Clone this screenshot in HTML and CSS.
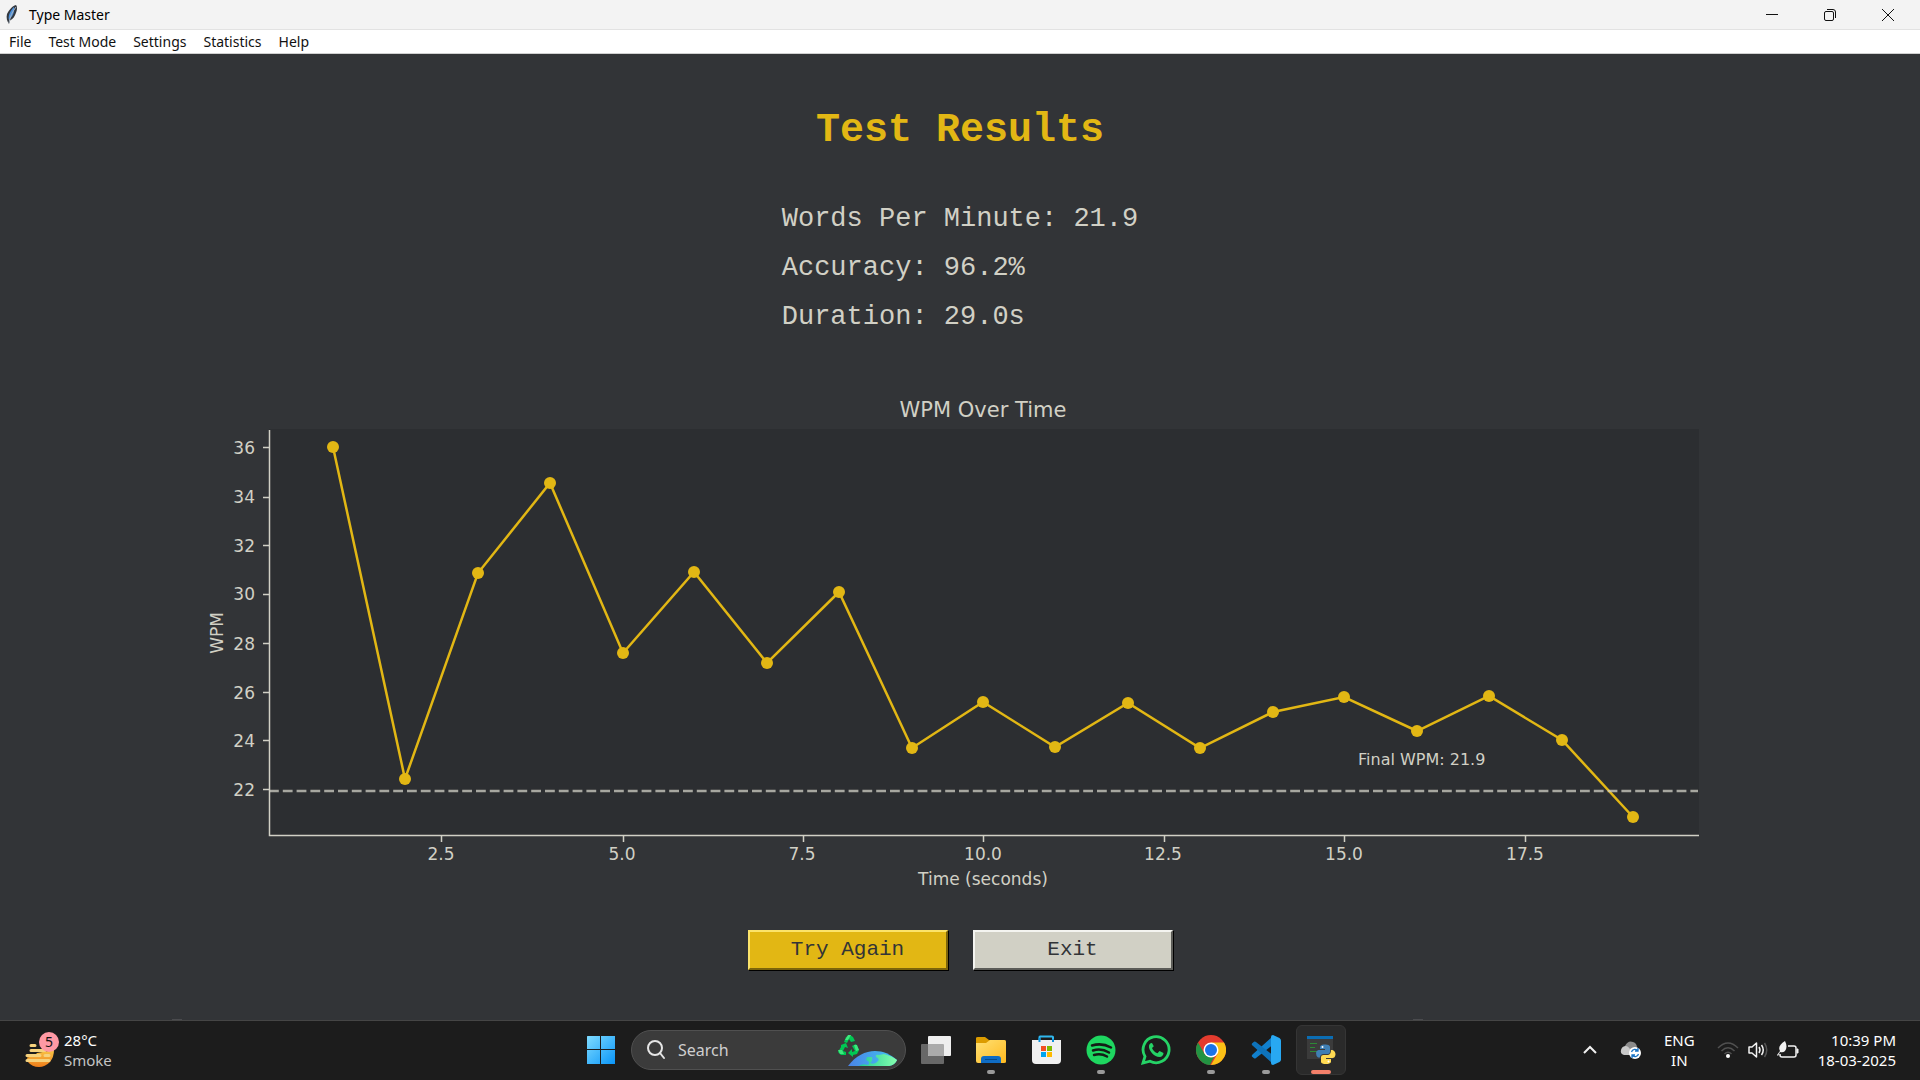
FILE: index.html
```html
<!DOCTYPE html>
<html lang="en">
<head>
<meta charset="utf-8">
<title>Type Master</title>
<link rel="stylesheet" href="styles.css">
</head>
<body>
<div class="desktop">
  <header class="titlebar">
    <svg class="feather" width="14" height="20" viewBox="0 0 14 20" aria-hidden="true">
      <path d="M4 19C2 16 1 13 2 9C4 5 7 1 11 0C13 2 12 7 9 12C8 14 5 15 5 16Z" fill="#33383f"/>
      <path d="M4 15C3 12 4 7 9 2C10 6 8 11 4 15Z" fill="#4a90dc"/>
      <path d="M4 18C5 12 7 7 11 2" fill="none" stroke="#a9b3be"/>
    </svg>
    <span class="window-title">Type Master</span>
    <div class="window-controls">
      <button class="win-btn" aria-label="Minimize"><svg width="14" height="14" viewBox="0 0 14 14"><path d="M1 6.500H13"/></svg></button>
      <button class="win-btn" aria-label="Restore"><svg width="14" height="14" viewBox="0 0 14 14"><rect x="1.500" y="3.500" width="9" height="9" rx="1.500"/><path d="M4 1.500H10Q12.500 1.500 12.500 4V10"/></svg></button>
      <button class="win-btn" aria-label="Close"><svg width="14" height="14" viewBox="0 0 14 14"><path d="M1 1L13 13M13 1L1 13"/></svg></button>
    </div>
  </header>
  <nav class="menubar" aria-label="Main menu">
    <button class="menu-item">File</button>
    <button class="menu-item">Test Mode</button>
    <button class="menu-item">Settings</button>
    <button class="menu-item">Statistics</button>
    <button class="menu-item">Help</button>
  </nav>

  <main class="results">
    <h1 class="heading">Test Results</h1>
    <div class="stats">
      <p class="stat">Words Per Minute: 21.9</p>
      <p class="stat">Accuracy: 96.2%</p>
      <p class="stat">Duration: 29.0s</p>
    </div>
    <svg class="chart" viewBox="0 0 1536 530" role="img" aria-label="WPM Over Time">
      <rect class="plot" x="77" y="49" width="1430" height="406"/>
      <text class="chart-title" x="791" y="37">WPM Over Time</text>
      <polyline class="series" points="141,67 213,399 286,193 358,103 431,273 502,192 575,283 647,212 720,368 791,322 863,367 936,323 1008,368 1081,332 1152,317 1225,351 1297,316 1370,360 1441,437"/>
      <g class="marker">
        <circle cx="141" cy="67" r="6"/><circle cx="213" cy="399" r="6"/><circle cx="286" cy="193" r="6"/><circle cx="358" cy="103" r="6"/><circle cx="431" cy="273" r="6"/><circle cx="502" cy="192" r="6"/><circle cx="575" cy="283" r="6"/><circle cx="647" cy="212" r="6"/><circle cx="720" cy="368" r="6"/><circle cx="791" cy="322" r="6"/><circle cx="863" cy="367" r="6"/><circle cx="936" cy="323" r="6"/><circle cx="1008" cy="368" r="6"/><circle cx="1081" cy="332" r="6"/><circle cx="1152" cy="317" r="6"/><circle cx="1225" cy="351" r="6"/><circle cx="1297" cy="316" r="6"/><circle cx="1370" cy="360" r="6"/><circle cx="1441" cy="437" r="6"/>
      </g>
      <path class="average" d="M77 411H1506"/>
      <path class="axis" d="M77.500 50V455.500H1507"/>
      <path class="axis" d="M71 67.500H77M71 117.500H77M71 165.500H77M71 214.500H77M71 263.500H77M71 312.500H77M71 360.500H77M71 409.500H77"/>
      <path class="axis" d="M249.500 456V462M431.500 456V462M611.500 456V462M791.500 456V462M972.500 456V462M1152.500 456V462M1333.500 456V462"/>
      <g class="y-label">
        <text x="63" y="74">36</text><text x="63" y="123">34</text><text x="63" y="172">32</text><text x="63" y="220">30</text><text x="63" y="270">28</text><text x="63" y="319">26</text><text x="63" y="367">24</text><text x="63" y="416">22</text>
      </g>
      <g class="x-label">
        <text x="249" y="480">2.5</text><text x="430" y="480">5.0</text><text x="610" y="480">7.5</text><text x="791" y="480">10.0</text><text x="971" y="480">12.5</text><text x="1152" y="480">15.0</text><text x="1333" y="480">17.5</text>
        <text x="791" y="505">Time (seconds)</text>
        <text transform="translate(31 253) rotate(-90)">WPM</text>
      </g>
      <text class="note" x="1166" y="385">Final WPM: 21.9</text>
    </svg>
    <div class="actions">
      <button class="action action-primary">Try Again</button>
      <button class="action">Exit</button>
    </div>
  </main>

  <footer class="taskbar">
    <button class="weather">
      <svg width="36" height="38" viewBox="0 0 36 38" aria-hidden="true">
        <defs><linearGradient id="sun" x2="0" y2="1"><stop stop-color="#f9c646"/><stop offset="1" stop-color="#ef7d1a"/></linearGradient></defs>
        <path d="M2 26.500Q10 25 12 22L29 19Q29 26 25 31Q20 36 14 36Q7 36 3 31Z" fill="url(#sun)"/>
        <path d="M6 14.500H10M6 19.500H20M2 24.500H15M20 24.500H24M2 29.500H24" fill="none" stroke="#f6d27d" stroke-width="3" stroke-linecap="round"/>
        <circle cx="24" cy="11" r="10" fill="#ff99a4"/>
        <text class="badge-text" x="24" y="16">5</text>
      </svg>
      <span class="weather-text"><span>28°C</span><span class="muted">Smoke</span></span>
    </button>

    <div class="apps">
      <button class="app" aria-label="Start">
        <svg width="30" height="30" viewBox="0 0 30 30"><defs><linearGradient id="win" x2="1" y2="1"><stop stop-color="#7fdcff"/><stop offset="1" stop-color="#0a95f8"/></linearGradient></defs><path fill="url(#win)" d="M1.500 1H14V14H1V1.500ZM15 1H29V14H15ZM1 15H14V29H1ZM15 15H29V29H15Z"/></svg>
      </button>
      <label class="search">
        <svg width="20" height="20" viewBox="0 0 20 20" aria-hidden="true"><circle cx="9" cy="8" r="7" fill="none" stroke="#e6e6e6" stroke-width="2"/><path d="M14 13L18 18" stroke="#e6e6e6" stroke-width="2" stroke-linecap="round"/></svg>
        <input class="search-input" type="text" placeholder="Search" aria-label="Search">
        <svg class="search-art" width="62" height="34" viewBox="0 0 62 34" aria-hidden="true">
          <defs><linearGradient id="sea" x2="1"><stop stop-color="#4a83e8"/><stop offset="1" stop-color="#41c6ef"/></linearGradient><linearGradient id="land" x2="1"><stop stop-color="#20ca98"/><stop offset="1" stop-color="#86ffae"/></linearGradient></defs>
          <path d="M11 33C25 14 46 14 60 27Q58 32 52 33Z" fill="url(#sea)"/>
          <path d="M22 33Q25 30 31 32Q34 29 29 27L30 24L35 24Q36 28 33 30Q38 32 41 28Q43 26 39 24Q38 21 42 22L47 21Q55 23 60 27Q58 32 52 33Z" fill="url(#land)"/>
          <path d="M7 9L9 4L13 2L16 4L18 8L14 9L12 6L10 10ZM16 2L19 8M4 12L9 10L11 15L8 14L6 18L9 19V22H4L1 19L4 14ZM11 20L15 16V19L18 18L15 13L19 11L22 17L20 21L16 22V24Z" fill="#00c853"/>
          <path d="M8 7L11 2H14L11 7ZM1 17L5 17L7 21H3ZM17 12L20 12L22 17L19 18Z" fill="#3ee87d"/>
        </svg>
      </label>
      <button class="app" aria-label="Task view">
        <svg width="32" height="30" viewBox="0 0 32 30"><rect x="1" y="9" width="23" height="20" rx="1" fill="#686868"/><rect x="8" y="1" width="23" height="20" rx="1" fill="#efefef"/><path d="M8 9H23Q24 9 24 10V21H9Q8 21 8 20Z" fill="#ababab"/></svg>
      </button>
      <button class="app app-open" aria-label="File Explorer">
        <svg width="30" height="30" viewBox="0 0 30 30"><path d="M0 3Q0 2 2 2H9L13 5H28Q30 5 30 7V15H0Z" fill="#dc9c00"/><defs><linearGradient id="folder" x2="1" y2="1"><stop stop-color="#ffe174"/><stop offset="1" stop-color="#ffb91f"/></linearGradient></defs><path d="M0 8H10L14 5H28Q30 5 30 7V27Q30 28 28 28H2Q0 28 0 26Z" fill="url(#folder)"/><path d="M5 28V24Q5 21 8 21H22Q25 21 25 24V28Z" fill="#0f6cc4"/><path d="M9 24.500H21" stroke="#064b8b" stroke-width="1"/></svg>
      </button>
      <button class="app" aria-label="Microsoft Store">
        <svg width="30" height="30" viewBox="0 0 30 30"><path d="M8.500 7V2Q8.500 1.500 9 1.500H21Q22 1.500 22 2V7" fill="none" stroke="#30b8ee" stroke-width="2"/><path d="M1 5H30V25Q30 29 26 29H5Q1 29 1 25Z" fill="#f0f0f0"/><path d="M8.500 7V4H7.500M22 7V4" fill="none" stroke="#0d92dc" stroke-width="2"/><path d="M10 11H15V16H10Z" fill="#f25022"/><path d="M16 11H21V16H16Z" fill="#7fba00"/><path d="M10 17H15V22H10Z" fill="#00a4ef"/><path d="M16 17H21V22H16Z" fill="#ffb900"/></svg>
      </button>
      <button class="app app-open" aria-label="Spotify">
        <svg width="30" height="30" viewBox="0 0 30 30"><circle cx="15" cy="15" r="14.500" fill="#1ed760"/><path d="M6 10.500Q16 7.500 25 12.500M7 15.500Q15.500 13 23 17.500M8 20Q15 18 21 21.500" fill="none" stroke="#141c16" stroke-width="2.500" stroke-linecap="round"/></svg>
      </button>
      <button class="app" aria-label="WhatsApp">
        <svg width="30" height="30" viewBox="0 0 30 30"><path d="M2 28L4 21.500A13 13 0 1 1 9 26.200Z" fill="none" stroke="#25d366" stroke-width="2.800"/><path d="M11 8C9 8 7.500 10 8 12.500C9 17 13 21.500 18.500 22C21 22 22.500 20 22.500 18L18.500 16L16.500 18.300C14 17.500 12 15.500 11 13L12.800 11.300Z" fill="#25d366"/></svg>
      </button>
      <button class="app app-open" aria-label="Chrome">
        <svg width="30" height="30" viewBox="0 0 30 30"><circle cx="15" cy="15" r="15" fill="#e33b2e"/><path d="M15 7.500H28A15 15 0 0 1 15 30L21.500 18.700Z" fill="#fbc116"/><path d="M2 7.500L8.500 18.700Q12 23 18 22L14 30A15 15 0 0 1 2 7.500Z" fill="#229342"/><circle cx="15" cy="15" r="7.500" fill="#fff"/><circle cx="15" cy="15" r="6" fill="#1a73e8"/></svg>
      </button>
      <button class="app app-open" aria-label="Visual Studio Code">
        <svg width="30" height="30" viewBox="0 0 30 30"><path d="M22 1L1.500 19.500Q0 21 1.500 22L3 23.200Q4 24 5 23L23 9Z" fill="#1180cd"/><path d="M22 29L1.500 10.500Q0 9 1.500 8L3 6.800Q4 6 5 7L23 21Z" fill="#0e73bb"/><path d="M22 0L28.500 3Q30 4 30 5.500V24.500Q30 26 28.500 27L22 30Q20 30 20 28V2Q20 0 22 0Z" fill="#28a8f2"/></svg>
      </button>
      <button class="app app-active" aria-label="Type Master">
        <svg width="30" height="30" viewBox="0 0 30 30"><rect x="1" y="1" width="26" height="23" fill="#3b3b3b"/><path d="M1 1H27V4H1Z" fill="#0b6db3"/><path d="M4 8.500H11M4 12.500H9M4 16.500H12" stroke="#2c8a35"/>
          <path d="M18 9.500Q23 9 24 11.500V17Q24 19 22 19H17Q14 19.500 14 22.500H12Q10 21 10 18Q10 15.500 12.500 15H19V14H14V12Q14 10 18 9.500Z" fill="#3f7fb4"/><path d="M20 29Q15.500 29 15 27V22Q15 20 17.500 20H22Q25 19.500 25 15H26.500Q29.500 16 29.500 19.500Q29 23 26.500 23H20V24H25V27Q24 29 20 29Z" fill="#ffda52"/><circle cx="16.500" cy="12" r="1" fill="#fff"/><circle cx="22.500" cy="26.500" r="1" fill="#fff"/></svg>
      </button>
    </div>

    <div class="tray">
      <button class="tray-btn" aria-label="Show hidden icons"><svg width="16" height="16" viewBox="0 0 16 16"><path d="M2 11L8 5L14 11" fill="none" stroke="#f0f0f0" stroke-width="2"/></svg></button>
      <button class="tray-btn tray-cloud" aria-label="Cloud sync"><svg width="22" height="20" viewBox="0 0 22 20"><path d="M5 6Q8 0 13 2Q17 3 17 8V11H5Z" fill="#8b8b8b"/><path d="M4 15Q0 14 1 10Q2 6 6 6Q8 6 10 9L13 8V15Z" fill="#c9c9c9"/><circle cx="15" cy="13" r="6" fill="#fff"/><path d="M11.500 12A3.600 3.600 0 0 1 18 11M18.500 14A3.600 3.600 0 0 1 12 15M18 8V11H15M12 18V15H15" fill="none" stroke="#1672c4" stroke-width="1.300"/></svg></button>
      <button class="tray-btn language"><span>ENG</span><span>IN</span></button>
      <button class="tray-btn status" aria-label="Network, sound and battery">
        <svg width="22" height="18" viewBox="0 0 22 18"><path d="M1 7Q11-3 21 7M4.500 10Q11 3.500 17.500 10M7.500 13Q11 9.500 14.500 13" fill="none" stroke="#505050" stroke-width="1.500"/><circle cx="11" cy="15" r="2" fill="#fff"/></svg>
        <svg width="22" height="18" viewBox="0 0 22 18"><path d="M2 6H5L9.500 2V16L5 12H2Z" fill="none" stroke="#f2f2f2" stroke-width="1.500" stroke-linejoin="round"/><path d="M12 6Q14 9 12 12M14.500 4Q18 9 14.500 14" fill="none" stroke="#f2f2f2" stroke-width="1.500"/><path d="M17.500 2Q22 9 17.500 16" fill="none" stroke="#555" stroke-width="1.500"/></svg>
        <svg width="22" height="18" viewBox="0 0 22 18"><path d="M11 5H17Q19 5 19 7V14Q19 16 17 16H5Q3 16 3 14V13" fill="none" stroke="#f2f2f2" stroke-width="1.500"/><path d="M20 8H21V12H20Z" stroke="#f2f2f2" fill="#f2f2f2"/><path d="M8 0Q11 6 8 10Q6 12 3 11L1 15L0 14L3 10Q0 5 8 0Z" fill="#f2f2f2"/></svg>
      </button>
      <button class="tray-btn clock"><span>10:39 PM</span><span>18-03-2025</span></button>
    </div>
  </footer>
</div>
</body>
</html>
```

FILE: styles.css
```css
* {
  box-sizing: border-box;
}

body {
  margin: 0;
  font-family: "Noto Sans", sans-serif;
  font-size: 14px;
}

button {
  margin: 0;
  padding: 0;
  border: 0;
  background: none;
  color: inherit;
  font: inherit;
}

svg {
  display: block;
  flex: none;
}

.desktop {
  display: flex;
  flex-direction: column;
  min-height: 100vh;
  background: #323437;
}

/* Window frame */

.titlebar {
  display: flex;
  align-items: center;
  height: 30px;
  padding-left: 5px;
  border-bottom: 1px solid #e2e2e2;
  background: #f3f3f3;
  color: #000;
}

.window-title {
  margin-left: 10px;
}

.window-controls {
  display: flex;
  align-self: stretch;
  margin-left: auto;
  padding-right: 3px;
}

.win-btn {
  display: grid;
  place-items: center;
  width: 58px;
}

.win-btn svg {
  fill: none;
  stroke: #111;
}

.menubar {
  display: flex;
  gap: 17px;
  height: 24px;
  padding-left: 9px;
  border-bottom: 1px solid #d0d0d0;
  background: #fff;
  color: #111;
}

.menu-item {
  line-height: 22px;
}

/* Results */

.results {
  display: flex;
  flex: 1;
  flex-direction: column;
  align-items: center;
  padding: 47px 0 50px;
  background-image: linear-gradient(#4a4b4e, #4a4b4e), linear-gradient(#4a4b4e, #4a4b4e);
  background-position: 9% 100%, 74% 100%;
  background-repeat: no-repeat;
  background-size: 10px 1px;
  color: #d1d0c5;
}

.heading {
  margin: 0;
  color: #e2b714;
  font: bold 40px/60px "Liberation Mono", "Courier New", monospace;
}

.stats {
  margin-top: 34px;
  font: 27px/49px "Liberation Mono", "Courier New", monospace;
}

.stat {
  margin: 0;
}

.chart {
  width: 80%;
  height: auto;
  margin-top: 38px;
  fill: #d1d0c5;
  font-family: "DejaVu Sans", sans-serif;
  font-size: 17px;
}

.plot {
  fill: #2c2e31;
}

.chart-title {
  font-size: 21px;
  text-anchor: middle;
}

.series {
  fill: none;
  stroke: #e2b714;
  stroke-width: 2.5;
}

.marker {
  fill: #e2b714;
}

.average {
  stroke: #d1d0c5;
  stroke-width: 2.5;
  stroke-dasharray: 9.8 4;
  opacity: 0.75;
}

.axis {
  fill: none;
  stroke: #d1d0c5;
  stroke-width: 1.5;
}

.x-label {
  text-anchor: middle;
}

.y-label {
  text-anchor: end;
}

.note {
  font-size: 16px;
}

.actions {
  display: flex;
  gap: 25px;
  margin-top: 20px;
}

.action {
  width: 200px;
  height: 40px;
  border: 2px solid;
  border-color: #f4f4f0 #5c5c58 #5c5c58 #f4f4f0;
  background: #d1d0c5;
  box-shadow: 1px 1px 0 #000;
  color: #323437;
  font: 21px/36px "Liberation Mono", "Courier New", monospace;
}

.action-primary {
  border-color: #fbe36a #7c640b #7c640b #fbe36a;
  background: #e2b714;
}

/* Taskbar */

.taskbar {
  display: grid;
  grid-template-columns: 1fr auto 1fr;
  align-items: center;
  height: 60px;
  padding-bottom: 2px;
  border-top: 1px solid #454545;
  background: #1c1c1c;
  color: #fff;
  font-size: 15px;
}

.weather {
  display: flex;
  align-items: center;
  justify-self: start;
  gap: 3px;
  padding-left: 25px;
  text-align: left;
}

.weather-text {
  display: flex;
  flex-direction: column;
  line-height: 20px;
}

.muted {
  color: #c4c4c4;
}

.badge-text {
  fill: #111;
  font-size: 14px;
  text-anchor: middle;
}

.apps {
  display: flex;
  align-items: center;
  gap: 5px;
  padding-left: 2px;
}

.app {
  position: relative;
  display: grid;
  place-items: center;
  width: 50px;
  height: 50px;
  border-radius: 6px;
}

.app-active {
  border: 1px solid #353535;
  background: #2a2a2a;
}

.app-open::after,
.app-active::after {
  position: absolute;
  bottom: 1px;
  width: 8px;
  height: 4px;
  border-radius: 2px;
  background: #9a9a9a;
  content: "";
}

.app-active::after {
  bottom: 0;
  width: 20px;
  background: #f4806a;
}

.search {
  display: flex;
  align-items: center;
  gap: 12px;
  width: 275px;
  height: 40px;
  padding: 0 6px 0 14px;
  border: 1px solid #505050;
  border-radius: 20px;
  background: #3b3b3b;
}

.search-input {
  flex: 1;
  min-width: 0;
  padding: 0;
  border: 0;
  background: none;
  color: #fff;
  font-family: inherit;
  font-size: 16px;
}

.search-input::placeholder {
  color: #cfcfcf;
  opacity: 1;
}

.tray {
  display: flex;
  align-items: center;
  justify-self: end;
  padding-right: 24px;
}

.tray-cloud {
  margin-left: 22px;
}

.language,
.clock {
  display: flex;
  flex-direction: column;
  line-height: 20px;
}

.language {
  align-items: center;
  margin-left: 22px;
}

.status {
  display: flex;
  gap: 8px;
  margin-left: 22px;
}

.clock {
  align-items: flex-end;
  margin-left: 19px;
}
```
